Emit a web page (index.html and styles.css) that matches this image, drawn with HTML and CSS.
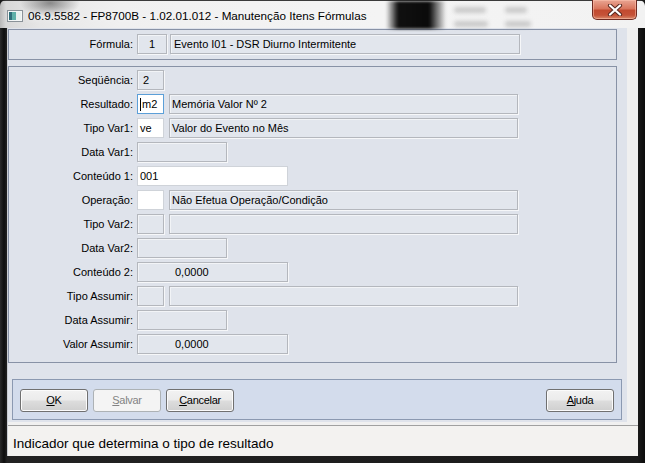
FILE: index.html
```html
<!DOCTYPE html>
<html lang="pt">
<head>
<meta charset="utf-8">
<title>Manutenção Itens Fórmulas</title>
<link rel="stylesheet" href="styles.css">
</head>
<body>
<div class="window">
  <div class="titlebar">
    <svg class="app-icon" width="16" height="12" viewBox="0 0 16 12">
      <rect x="0.5" y="0.5" width="15" height="11" fill="#f4f6f6" stroke="#8a9298"/>
      <rect x="2" y="2" width="3" height="8" fill="#2f6f7a"/>
      <rect x="5" y="2" width="4" height="8" fill="#5fb0a8"/>
      <rect x="9" y="2" width="5" height="8" fill="#e8f0ee"/>
    </svg>
    <span class="title-text">06.9.5582 - FP8700B - 1.02.01.012 - Manutenção Itens Fórmulas</span>
    <span class="blur-blob"></span>
    <span class="blur-text b1"></span>
    <span class="blur-text b2"></span>
    <span class="blur-text b3"></span>
    <span class="blur-text b4"></span>
    <div class="close-btn">
      <svg width="16" height="12" viewBox="0 0 16 12">
        <path d="M3 1.5 L13 10.5 M13 1.5 L3 10.5" stroke="#5a2a22" stroke-width="4.2" stroke-linecap="round"/>
        <path d="M3 1.5 L13 10.5 M13 1.5 L3 10.5" stroke="#ffffff" stroke-width="2.2" stroke-linecap="round"/>
      </svg>
    </div>
  </div>
  <div class="frame">
    <div class="client">
      <div class="main">
        <div class="panel panel-formula">
          <div class="row">
            <span class="label">Fórmula:</span>
            <span class="field code-f ro center">1</span>
            <span class="field desc-f ro">Evento I01 - DSR Diurno Intermitente</span>
          </div>
        </div>
        <div class="panel panel-fields">
          <div class="row">
            <span class="label">Seqüência:</span>
            <span class="field code ro pad5">2</span>
          </div>
          <div class="row">
            <span class="label">Resultado:</span>
            <span class="field code edit focus"><span class="caret"></span>m2</span>
            <span class="field desc ro">Memória Valor Nº 2</span>
          </div>
          <div class="row">
            <span class="label">Tipo Var1:</span>
            <span class="field code edit">ve</span>
            <span class="field desc ro">Valor do Evento no Mês</span>
          </div>
          <div class="row">
            <span class="label">Data Var1:</span>
            <span class="field date ro"></span>
          </div>
          <div class="row">
            <span class="label">Conteúdo 1:</span>
            <span class="field content edit">001</span>
          </div>
          <div class="row">
            <span class="label">Operação:</span>
            <span class="field code edit"></span>
            <span class="field desc ro">Não Efetua Operação/Condição</span>
          </div>
          <div class="row">
            <span class="label">Tipo Var2:</span>
            <span class="field code ro"></span>
            <span class="field desc ro"></span>
          </div>
          <div class="row">
            <span class="label">Data Var2:</span>
            <span class="field date ro"></span>
          </div>
          <div class="row">
            <span class="label">Conteúdo 2:</span>
            <span class="field content ro num">0,0000</span>
          </div>
          <div class="row">
            <span class="label">Tipo Assumir:</span>
            <span class="field code ro"></span>
            <span class="field desc ro"></span>
          </div>
          <div class="row">
            <span class="label">Data Assumir:</span>
            <span class="field date ro"></span>
          </div>
          <div class="row">
            <span class="label">Valor Assumir:</span>
            <span class="field content ro num">0,0000</span>
          </div>
        </div>
        <div class="buttonbar">
          <button class="btn"><u>O</u>K</button>
          <button class="btn disabled"><u>S</u>alvar</button>
          <button class="btn"><u>C</u>ancelar</button>
          <span class="spacer"></span>
          <button class="btn"><u>A</u>juda</button>
        </div>
      </div>
      <div class="statusbar">Indicador que determina o tipo de resultado</div>
    </div>
  </div>
</div>
</body>
</html>
```
FILE: styles.css
```css
* { box-sizing: border-box; }
html, body { margin: 0; padding: 0; }
body {
  width: 645px;
  height: 463px;
  overflow: hidden;
  background: #1a1a1a;
  font-family: "Liberation Sans", Arial, sans-serif;
}
.window {
  width: 645px;
  height: 463px;
  display: flex;
  flex-direction: column;
  background: #1e1e1e;
  border-radius: 6px 6px 0 0;
  overflow: hidden;
}
.titlebar {
  position: relative;
  height: 28px;
  flex: none;
  display: flex;
  align-items: center;
  padding-left: 7px;
  border-top: 1px solid #3a3a3a;
  background:
    radial-gradient(ellipse 30px 14px at 50px 2px, rgba(60,60,60,0.55), rgba(60,60,60,0) 100%),
    linear-gradient(to right, #b8b8b8 0px, #d8d8d8 6px, #e6e6e6 40px, #f0f0f0 120px, #f4f4f4 380px, #f2f2f2 645px);
}
.app-icon { flex: none; margin-top: 2px; }
.title-text {
  margin-left: 5px;
  margin-top: 2px;
  font-size: 11.7px;
  color: #000;
  white-space: nowrap;
  text-shadow: 0 0 6px rgba(255,255,255,0.9);
  position: relative;
  z-index: 1;
}
.blur-blob {
  position: absolute;
  left: 386px;
  top: 0;
  width: 60px;
  height: 28px;
  background: linear-gradient(to right, rgba(20,20,20,0) 0%, #101010 20%, #0a0a0a 72%, rgba(20,20,20,0) 100%);
  filter: blur(1.5px);
}
.blur-text {
  position: absolute;
  height: 6px;
  background: rgba(150,150,150,0.45);
  filter: blur(2px);
  border-radius: 3px;
}
.b1 { left: 454px; top: 6px; width: 32px; }
.b2 { left: 505px; top: 6px; width: 22px; }
.b3 { left: 454px; top: 20px; width: 34px; }
.b4 { left: 505px; top: 20px; width: 26px; }
.close-btn {
  position: absolute;
  left: 592px;
  top: -1px;
  width: 45px;
  height: 20px;
  border: 1px solid #6e2a22;
  border-top: none;
  border-radius: 0 0 5px 5px;
  background: linear-gradient(to bottom, #e9a593 0%, #d9765e 45%, #c24a30 55%, #c55238 80%, #d98a6c 100%);
  box-shadow: inset 0 0 0 1px rgba(255,200,180,0.5);
  display: flex;
  align-items: center;
  justify-content: center;
}
.frame {
  flex: 1;
  display: flex;
  padding: 0 7px 7px 7px;
  background: linear-gradient(to right, #2a2a2a 0, #0e0e0e 4px, #222 7px, #1a1a1a 638px, #0c0c0c 645px);
}
.client {
  flex: 1;
  display: flex;
  flex-direction: column;
  background: #f0f0f0;
  border-left: 1px solid #c9ccd2;
}
.main {
  width: 619px;
  background: #dfe3eb;
  padding: 1px 0 2px 0;
}
.panel {
  width: 609px;
  border: 1px solid #8892a6;
  background: #dfe3eb;
}
.panel-formula {
  height: 31px;
  padding-top: 4px;
}
.panel-fields {
  margin-top: 6px;
  height: 297px;
  padding-top: 3px;
  display: flex;
  flex-direction: column;
  gap: 4px;
}
.row {
  display: flex;
  align-items: center;
  height: 20px;
  font-size: 11px;
  color: #000;
}
.label {
  width: 124px;
  margin-right: 4px;
  text-align: right;
  white-space: nowrap;
}
.field {
  position: relative;
  height: 20px;
  display: flex;
  align-items: center;
  padding-left: 2px;
  white-space: nowrap;
  font-size: 11px;
}
.ro {
  background: #e2e6ed;
  border: 1px solid #b4b7bd;
  box-shadow: inset 1px 1px 0 #f2f4f7, 1px 1px 0 #f6f7f9;
}
.edit {
  background: #ffffff;
  border: 1px solid #cfd3d9;
}
.focus {
  border: 1px solid #5c9fd8;
  padding-left: 4px;
}
.caret {
  position: absolute;
  left: 2px;
  top: 3px;
  width: 1px;
  height: 13px;
  background: #000;
}
.center { justify-content: center; padding-left: 0; }
.pad5 { padding-left: 5px; }
.num { padding-left: 37px; }
.code { width: 27px; }
.desc { width: 349px; margin-left: 5px; }
.date { width: 90px; }
.content { width: 151px; }
.code-f { width: 30px; }
.desc-f { width: 350px; margin-left: 3px; padding-left: 3px; }
.buttonbar {
  margin: 16px 0 0 4px;
  width: 610px;
  height: 41px;
  border: 1px solid #8b99b1;
  background: #d3dcec;
  display: flex;
  align-items: center;
  padding: 0 7px;
  gap: 5px;
}
.spacer { flex: 1; }
.btn {
  width: 68px;
  height: 23px;
  margin-top: 1px;
  border: 1px solid #707070;
  border-radius: 3px;
  background: linear-gradient(to bottom, #f2f2f2 0%, #ebebeb 48%, #dddddd 52%, #cfcfcf 100%);
  box-shadow: inset 0 0 0 1px #fbfbfb;
  font-family: "Liberation Sans", Arial, sans-serif;
  font-size: 11px;
  letter-spacing: -0.3px;
  color: #000;
  padding: 0;
}
.btn.disabled {
  border-color: #adb2b5;
  background: #f4f4f4;
  box-shadow: none;
  color: #838383;
}
.statusbar {
  margin-top: 3px;
  flex: 1;
  border-top: 1px solid #a0a0a0;
  background: #f3f2f0;
  font-size: 13.5px;
  padding: 10px 0 0 5px;
  color: #000;
  white-space: nowrap;
}
```
